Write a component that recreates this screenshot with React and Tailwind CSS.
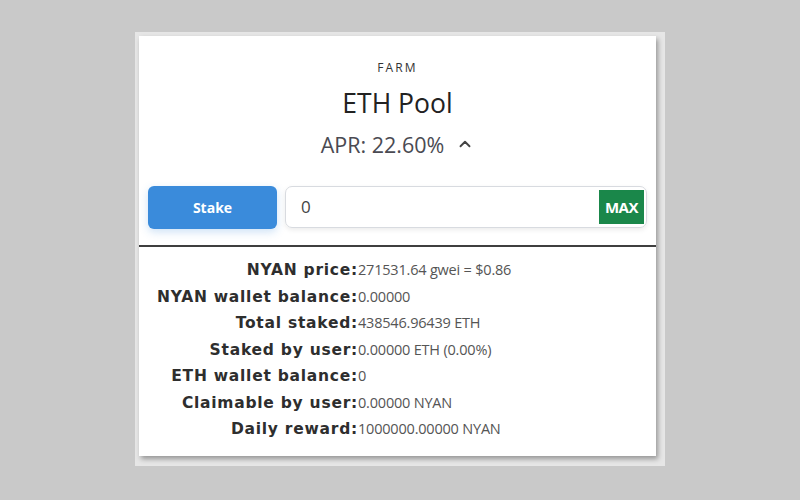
import { ChevronUp } from "lucide-react";

const stats = [
  ["NYAN price:", "271531.64 gwei = $0.86"],
  ["NYAN wallet balance:", "0.00000"],
  ["Total staked:", "438546.96439 ETH"],
  ["Staked by user:", "0.00000 ETH (0.00%)"],
  ["ETH wallet balance:", "0"],
  ["Claimable by user:", "0.00000 NYAN"],
  ["Daily reward:", "1000000.00000 NYAN"],
];

const App = () => {
  return (
    <div
      className="h-[500px] w-[800px] bg-[#c9c9c9] pl-[135px] pt-[32px]"
      style={{ fontFamily: '"Open Sans", "Noto Sans", sans-serif' }}
    >
      <div className="h-[434px] w-[530px] bg-[#e6e6e6] pl-[4px] pt-[4px]">
        <div className="flex h-[420px] w-[517px] flex-col bg-white shadow-[2px_3px_5px_rgba(0,0,0,0.35)]">
          <div className="pt-[24px] text-center">
            <div className="text-[12px] leading-[16px] tracking-[0.18em] text-[#333]">FARM</div>
            <div className="mt-[11px] text-[26.5px] leading-[32px] text-[#222]">ETH Pool</div>
            <div className="mt-[12px] flex items-center justify-center gap-[12px] text-[21.5px] leading-[28px] text-[#4a4a52]">
              <span>APR: 22.60%</span>
              <ChevronUp size={18} strokeWidth={2.5} className="mb-[2px] text-[#444]" />
            </div>
          </div>

          <div className="mt-[27px] flex gap-[8px] px-[9px]">
            <button className="h-[43px] w-[129px] rounded-[6px] bg-[#3a8bdb] text-[14px] font-bold text-white shadow-[0_3px_8px_rgba(58,139,219,0.25)]">
              Stake
            </button>
            <div className="flex h-[42px] flex-1 items-center rounded-[7px] border border-[#d8dbe0] pl-[15px] pr-[2px] shadow-[0_2px_5px_rgba(0,0,0,0.08)]">
              <span className="flex-1 text-[17px] text-[#444]">0</span>
              <span className="flex h-[34px] w-[45px] items-center justify-center bg-[#1a874a] text-[15px] font-bold tracking-[-0.03em] text-white">
                MAX
              </span>
            </div>
          </div>

          <div className="mt-[16px] h-[2px] bg-[#3f3f3f]" />

          <div className="grid grid-cols-[219px_1fr] pt-[10px] leading-[26.5px]">
            {stats.map(([label, value]) => (
              <div key={label} className="contents">
                <span
                  className="text-right text-[15.5px] font-bold tracking-[0.75px] text-[#2e2e2e]"
                  style={{ fontFamily: '"DejaVu Sans", sans-serif' }}
                >
                  {label}
                </span>
                <span className="text-[14.5px] tracking-[-0.2px] text-[#555]">{value}</span>
              </div>
            ))}
          </div>
        </div>
      </div>
    </div>
  );
};

export default App;
